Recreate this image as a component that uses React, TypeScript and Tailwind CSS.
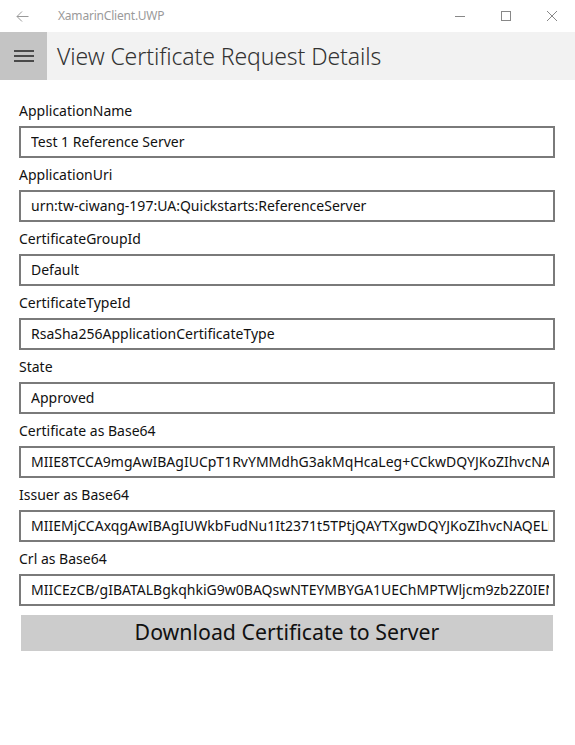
import React from "react";

const fields: [string, string][] = [
  ["ApplicationName", "Test 1 Reference Server"],
  ["ApplicationUri", "urn:tw-ciwang-197:UA:Quickstarts:ReferenceServer"],
  ["CertificateGroupId", "Default"],
  ["CertificateTypeId", "RsaSha256ApplicationCertificateType"],
  ["State", "Approved"],
  ["Certificate as Base64", "MIIE8TCCA9mgAwIBAgIUCpT1RvYMMdhG3akMqHcaLeg+CCkwDQYJKoZIhvcNAQELBQAw"],
  ["Issuer as Base64", "MIIEMjCCAxqgAwIBAgIUWkbFudNu1It2371t5TPtjQAYTXgwDQYJKoZIhvcNAQELBQAw"],
  ["Crl as Base64", "MIICEzCB/gIBATALBgkqhkiG9w0BAQswNTEYMBYGA1UEChMPTWljcm9zb2Z0IENvcnA"],
];

export default function App() {
  return (
    <div
      className="w-[575px] h-[745px] bg-white overflow-hidden"
      style={{ fontFamily: '"Noto Sans", "Open Sans", sans-serif' }}
    >
      {/* Title bar */}
      <div className="h-[32px] flex items-center text-[#999]">
        <div className="w-[44px] flex justify-center pl-[1px]">
          <svg width="13" height="11" viewBox="0 0 13 11" fill="none" stroke="#999" strokeWidth="1">
            <path d="M12.5 5.5H1M6 0.5L1 5.5L6 10.5" />
          </svg>
        </div>
        <div className="ml-[14px] text-[12px] text-[#9a9a9a] tracking-[-0.2px]">XamarinClient.UWP</div>
        <div className="ml-auto flex items-center h-full">
          <div className="w-[46px] h-full flex items-center justify-center">
            <svg width="10" height="10" viewBox="0 0 10 10"><path d="M0 5.5H10" stroke="#888" strokeWidth="1" /></svg>
          </div>
          <div className="w-[46px] h-full flex items-center justify-center">
            <svg width="10" height="10" viewBox="0 0 10 10"><rect x="0.5" y="0.5" width="9" height="9" fill="none" stroke="#888" strokeWidth="1" /></svg>
          </div>
          <div className="w-[46px] h-full flex items-center justify-center">
            <svg width="10" height="10" viewBox="0 0 10 10"><path d="M0 0L10 10M10 0L0 10" stroke="#888" strokeWidth="1" /></svg>
          </div>
        </div>
      </div>

      {/* Header */}
      <div className="h-[48px] bg-[#f2f2f2] flex items-center">
        <div className="w-[47px] h-full bg-[#c4c4c4] flex items-center justify-center">
          <svg width="20" height="12" viewBox="0 0 20 12">
            <path d="M0 1H20M0 6H20M0 11H20" stroke="#222" strokeWidth="1.3" />
          </svg>
        </div>
        <div className="ml-[10px] text-[23px] text-[#333] font-light tracking-[-0.1px]">
          View Certificate Request Details
        </div>
      </div>

      {/* Form */}
      <div className="pt-[20px] pl-[19px] pr-[20px] flex flex-col">
        {fields.map(([label, value]) => (
          <div key={label} className="flex flex-col">
            <div className="h-[20px] flex items-center text-[14px] text-[#111]">{label}</div>
            <div className="mt-[6px] mb-[6px] h-[32px] border-2 border-[#7a7a7a] flex items-center pl-[10px] pr-[4px]">
              <div className="flex-1 min-w-0 overflow-hidden whitespace-nowrap text-[14px] text-[#111] leading-[20px] -mt-[1px]">
                {value}
              </div>
            </div>
          </div>
        ))}
        <button className="mt-[3px] mx-[2px] h-[36px] bg-[#cccccc] text-[21.3px] text-[#111] flex items-center justify-center">
          <span className="-mt-[2px]">Download Certificate to Server</span>
        </button>
      </div>
    </div>
  );
}
